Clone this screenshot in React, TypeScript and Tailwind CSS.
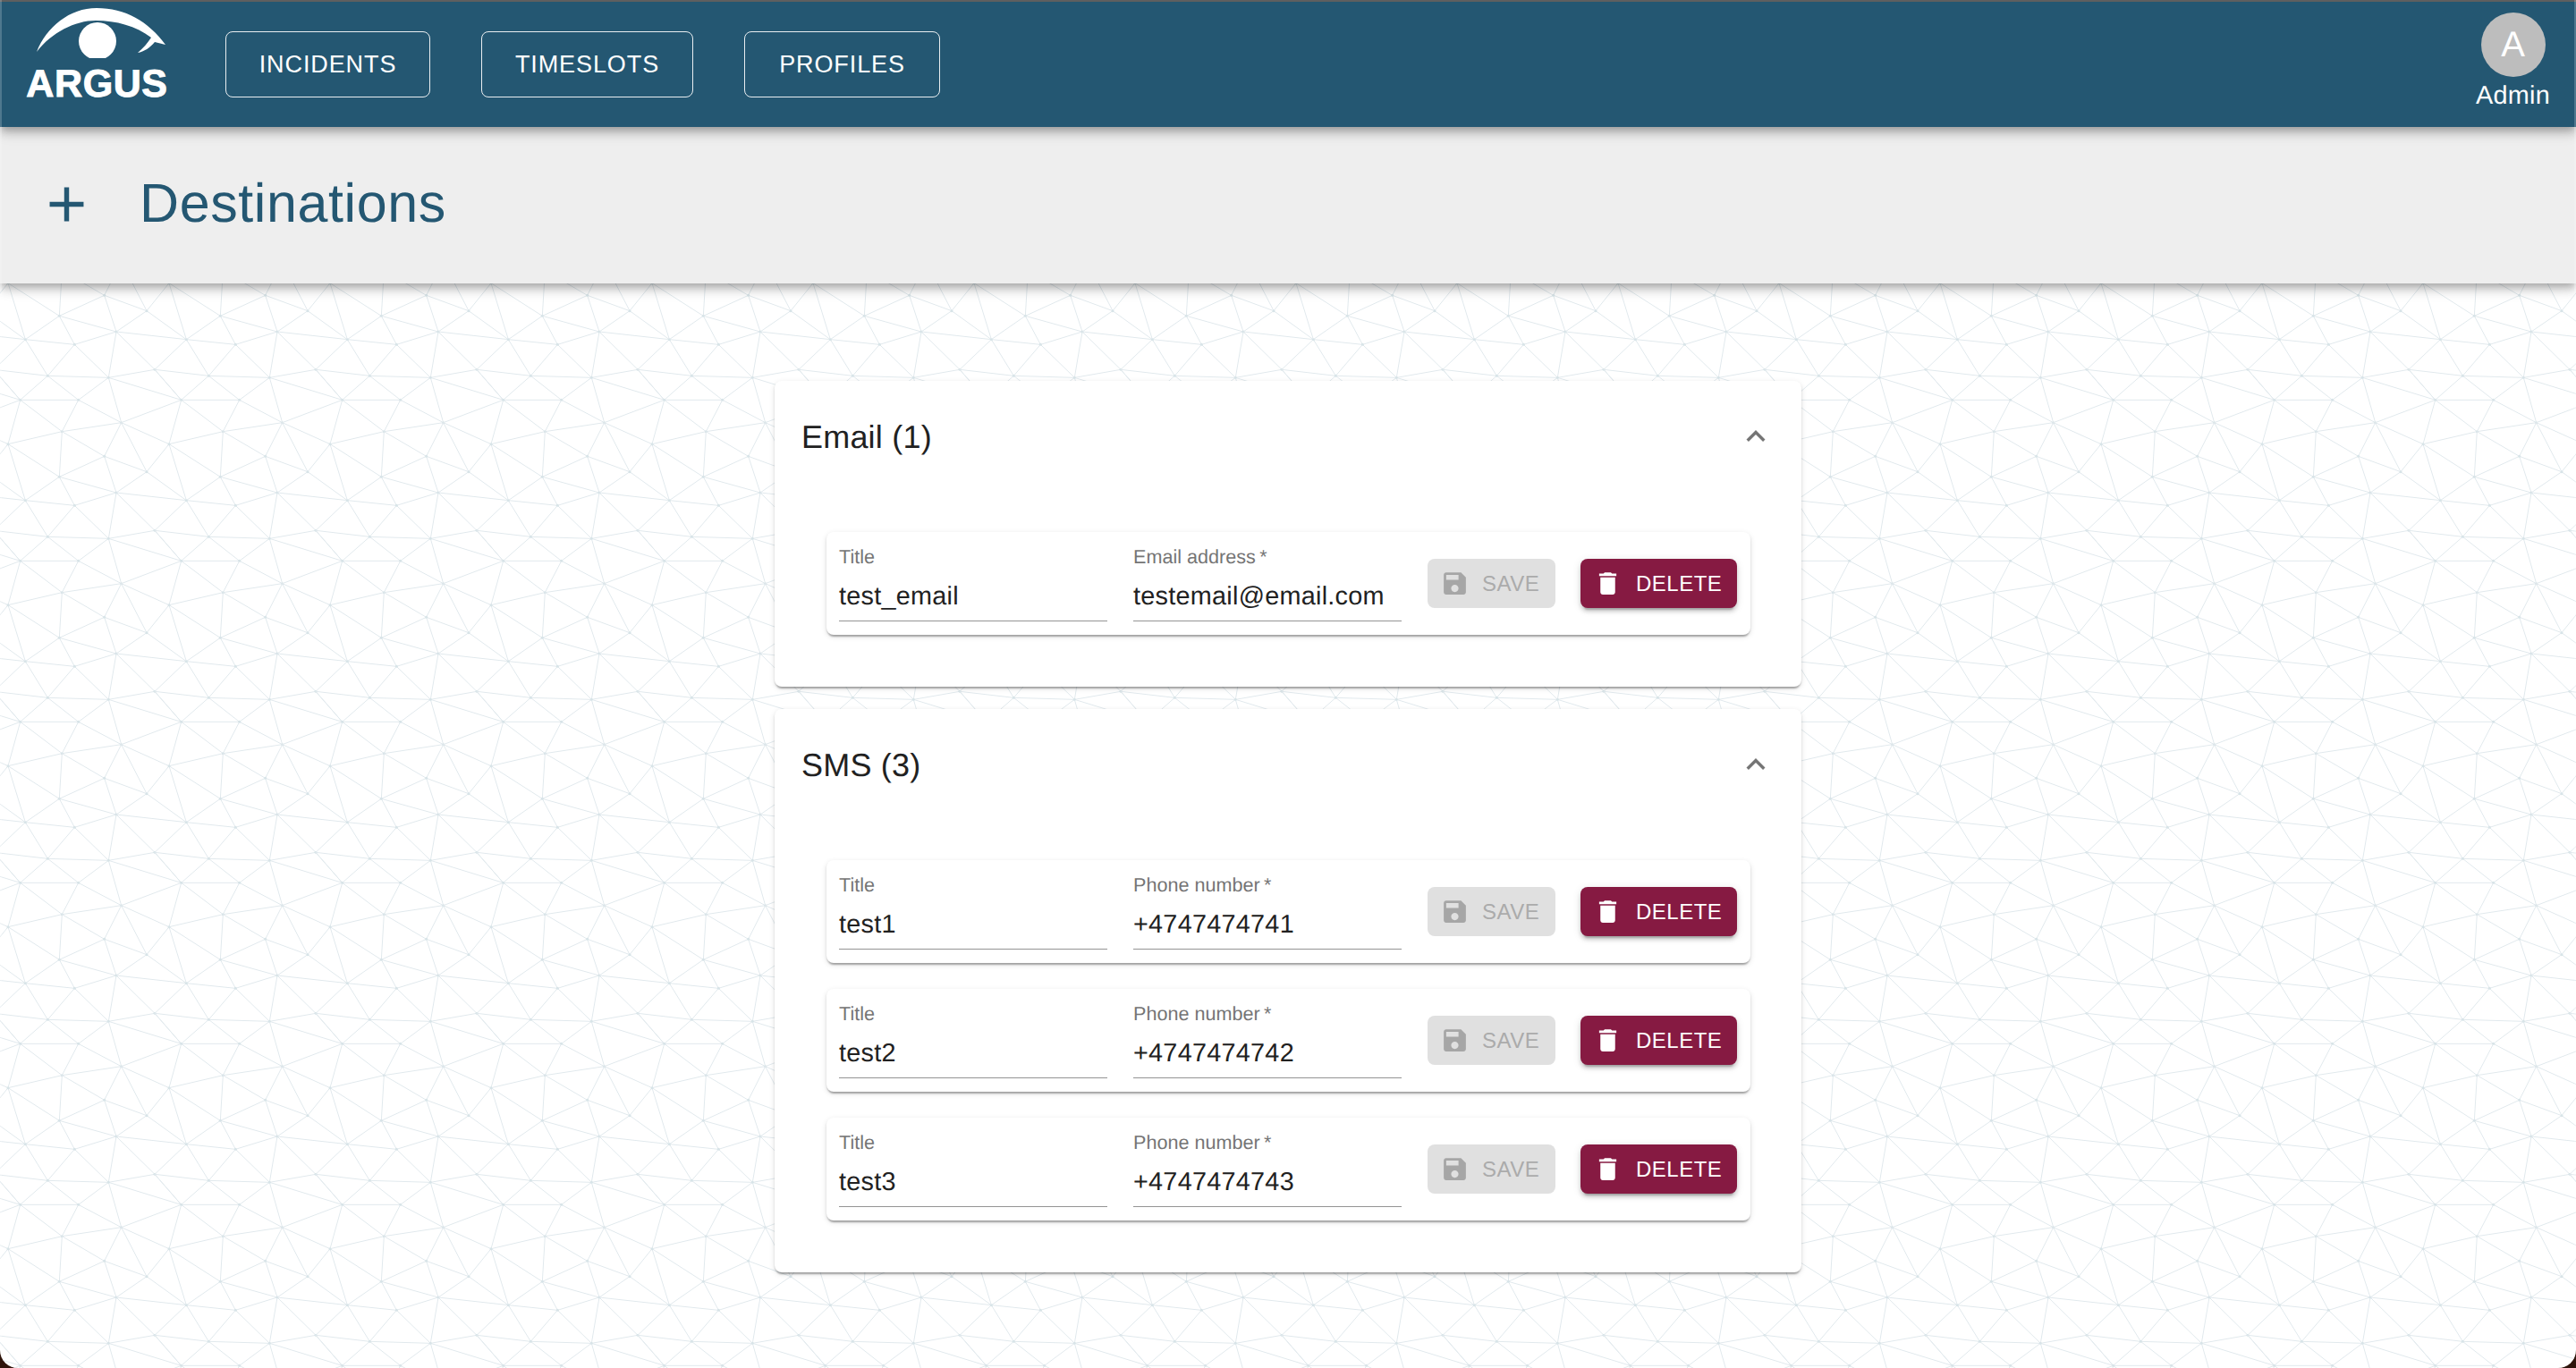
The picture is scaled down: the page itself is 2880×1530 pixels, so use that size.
const EDGES: number[][] = [
  [27, 50, 199, 160], [27, 50, 85, 239], [199, 160, 350, 91], [199, 160, 85, 239], [199, 160, 250, 256],
  [199, 160, 390, 213], [199, 160, 208, 8], [350, 91, 208, 8], [350, 91, 390, 213], [350, 91, 407, -22],
  [350, 91, 492, 143], [492, 143, 390, 213], [492, 143, 625, 239], [492, 143, 407, -22], [492, 143, 567, 50],
  [85, 239, 250, 256], [85, 239, -150, 213], [85, 239, 160, 361], [85, 239, -21, 340], [250, 256, 390, 213],
  [250, 256, 160, 361], [250, 256, 364, 367], [390, 213, 364, 367], [390, 213, 519, 340], [160, 361, 364, 367],
  [160, 361, -21, 340], [160, 361, 68, 442], [160, 361, 263, 442], [364, 367, 519, 340], [364, 367, 263, 442],
  [364, 367, 608, 442], [364, 367, 407, 518], [519, 340, 608, 442], [68, 442, 263, 442], [68, 442, 208, 548],
  [68, 442, 27, 590], [68, 442, -133, 518], [68, 442, -21, 340], [263, 442, 407, 518], [263, 442, 208, 548],
  [407, 518, 208, 548], [407, 518, 567, 590], [208, 548, 27, 590],
];

const NODES = [
  [27, 50], [199, 160], [350, 91], [492, 143], [85, 239], [250, 256], [390, 213],
  [160, 361], [364, 367], [519, 340], [68, 442], [263, 442], [407, 518], [208, 548],
];

const OFFSETS = [-540, 0, 540];

function MeshBackground() {
  return (
    <svg className="absolute inset-0 h-full w-full" aria-hidden="true">
      <defs>
        <pattern
          id="mesh"
          width="180"
          height="180"
          viewBox="0 0 540 540"
          patternUnits="userSpaceOnUse"
          patternTransform="translate(0 300)"
        >
          {OFFSETS.map((dx) =>
            OFFSETS.map((dy) => (
              <g key={`${dx}-${dy}`} transform={`translate(${dx} ${dy})`}>
                {EDGES.map(([x1, y1, x2, y2], i) => (
                  <line key={i} x1={x1} y1={y1} x2={x2} y2={y2} stroke="#e1e9ed" strokeWidth="3" />
                ))}
                {NODES.map(([cx, cy], i) => (
                  <circle key={i} cx={cx} cy={cy} r="4.5" fill="#d8e4e8" />
                ))}
              </g>
            ))
          )}
        </pattern>
      </defs>
      <rect width="100%" height="100%" fill="url(#mesh)" />
    </svg>
  );
}

function Logo() {
  return (
    <div className="flex w-[165px] flex-col items-center self-start pt-[3px]">
      <svg viewBox="25 5 165 60" className="h-[60px] w-[165px] shrink-0" aria-hidden="true">
        <path
          fill="#ffffff"
          d="M41 58C52 30 78 9 108 9C140 9 166 24 185 50L173 47C168 53 161 58 154 59C160 54 165 48 169 42C152 29 130 23 107 23C84 23 58 36 41 58Z"
        />
        <circle cx="109" cy="46" r="21" fill="#ffffff" />
      </svg>
      <span className="mt-[8px] ml-[2px] text-[43px] leading-[42px] font-bold tracking-[0.6px] text-white [-webkit-text-stroke:1px_white]">
        ARGUS
      </span>
    </div>
  );
}

function NavButton({ label, width }: { label: string; width: string }) {
  return (
    <button
      type="button"
      className={`flex h-[74px] items-center justify-center rounded-lg border border-white/90 text-[27px] tracking-[0.9px] text-white ${width}`}
    >
      {label}
    </button>
  );
}

function Field({ label, value, required }: { label: string; value: string; required?: boolean }) {
  return (
    <div className="flex h-[100px] w-[300px] shrink-0 flex-col border-b border-[#949494] pt-[16px]">
      <span className="text-[21.6px] leading-[24px] text-[#757575]">
        {label}
        {required && <span>&thinsp;*</span>}
      </span>
      <span className="mt-[16px] text-[28.8px] leading-[32px] tracking-[0.27px] text-[#212121]">{value}</span>
    </div>
  );
}

function DestinationRow({ title, value, valueLabel }: { title: string; value: string; valueLabel: string }) {
  return (
    <div className="flex h-[115px] items-start rounded-lg bg-white pl-[14px] shadow-[0_4px_2px_-2px_rgba(0,0,0,0.2),0_2px_2px_0_rgba(0,0,0,0.14),0_2px_6px_0_rgba(0,0,0,0.12)]">
      <Field label="Title" value={title} />
      <div className="ml-[29px]">
        <Field label={valueLabel} value={value} required />
      </div>
      <button
        type="button"
        className="mt-[30px] ml-[29px] flex h-[55px] w-[143px] items-center gap-[14px] rounded-lg bg-[#e0e0e0] pl-[14px] text-[24px] tracking-[0.5px] text-[#ababab]"
      >
        <svg viewBox="0 0 24 24" className="h-[33px] w-[33px] shrink-0" fill="#a6a6a6" aria-hidden="true">
          <path d="M17 3H5c-1.11 0-2 .9-2 2v14c0 1.1.89 2 2 2h14c1.1 0 2-.9 2-2V7l-4-4zm-5 16c-1.66 0-3-1.34-3-3s1.34-3 3-3 3 1.34 3 3-1.34 3-3 3zm3-10H5V5h10v4z" />
        </svg>
        SAVE
      </button>
      <button
        type="button"
        className="mt-[30px] ml-[28px] flex h-[55px] w-[175px] items-center gap-[15px] rounded-lg bg-[#861a42] pl-[14px] text-[24px] tracking-[0.5px] text-white shadow-[0_6px_2px_-4px_rgba(0,0,0,0.2),0_4px_4px_0_rgba(0,0,0,0.14),0_2px_10px_0_rgba(0,0,0,0.12)]"
      >
        <svg viewBox="0 0 24 24" className="h-[33px] w-[33px] shrink-0" fill="#ffffff" aria-hidden="true">
          <path d="M6 19c0 1.1.9 2 2 2h8c1.1 0 2-.9 2-2V7H6v12zM19 4h-3.5l-1-1h-5l-1 1H5v2h14V4z" />
        </svg>
        DELETE
      </button>
    </div>
  );
}

function MediumCard({ title, children }: { title: string; children: React.ReactNode }) {
  return (
    <section className="rounded-lg bg-white pb-[58px] shadow-[0_4px_2px_-2px_rgba(0,0,0,0.2),0_2px_2px_0_rgba(0,0,0,0.14),0_2px_6px_0_rgba(0,0,0,0.12)]">
      <div className="flex h-[124px] items-center justify-between pr-[30px] pl-[30px]">
        <h2 className="mt-[2px] text-[36px] leading-[44px] tracking-[0.2px] text-[#212121]">{title}</h2>
        <svg viewBox="0 0 24 24" className="h-[42px] w-[42px]" fill="#757575" aria-hidden="true">
          <path d="M12 8l-6 6 1.41 1.41L12 10.83l4.59 4.58L18 14z" />
        </svg>
      </div>
      <div className="mt-[45px] flex flex-col gap-[29px] pr-[57px] pl-[58px]">{children}</div>
    </section>
  );
}

export default function App() {
  return (
    <div className="h-screen bg-[#2e140b] font-['Liberation_Sans',Arial,sans-serif] [text-rendering:geometricPrecision]">
      <div className="relative h-full overflow-hidden rounded-b-[20px] bg-white">
        <MeshBackground />

        <div className="relative">
          <header className="relative z-20 flex h-[142px] items-center border-t-2 border-[#5f5f5f] bg-[#245772] pr-[29px] pl-[25px] shadow-[0_4px_8px_-2px_rgba(0,0,0,0.2),0_8px_10px_0_rgba(0,0,0,0.14),0_2px_20px_0_rgba(0,0,0,0.12)]">
            <Logo />
            <nav className="ml-[62px] flex items-center gap-[57px]">
              <NavButton label="INCIDENTS" width="w-[229px]" />
              <NavButton label="TIMESLOTS" width="w-[237px]" />
              <NavButton label="PROFILES" width="w-[219px]" />
            </nav>
            <div className="ml-auto flex flex-col items-center self-start pt-[12px]">
              <div className="flex h-[72px] w-[72px] items-center justify-center rounded-full bg-[#bdbdbd] text-[40px] text-white">
                A
              </div>
              <span className="mt-[5px] text-[28.8px] leading-[32px] tracking-[0.27px] text-white">Admin</span>
            </div>
          </header>

          <div className="relative z-10 flex h-[175px] items-center bg-[#eeeeee] pb-[3px] shadow-[0_4px_8px_-2px_rgba(0,0,0,0.2),0_8px_10px_0_rgba(0,0,0,0.14),0_2px_20px_0_rgba(0,0,0,0.12)]">
            <svg viewBox="0 0 24 24" className="ml-[42px] h-[65px] w-[65px] shrink-0" fill="#245772" aria-hidden="true">
              <path d="M19 13h-6v6h-2v-6H5v-2h6V5h2v6h6v2z" />
            </svg>
            <h1 className="mb-[2px] ml-[49px] text-[61px] leading-[72px] tracking-[0.6px] text-[#245772]">Destinations</h1>
          </div>

          <main className="mx-auto mt-[109px] flex w-[1148px] flex-col gap-[25px]">
            <MediumCard title="Email (1)">
              <DestinationRow title="test_email" value="testemail@email.com" valueLabel="Email address" />
            </MediumCard>
            <MediumCard title="SMS (3)">
              <DestinationRow title="test1" value="+4747474741" valueLabel="Phone number" />
              <DestinationRow title="test2" value="+4747474742" valueLabel="Phone number" />
              <DestinationRow title="test3" value="+4747474743" valueLabel="Phone number" />
            </MediumCard>
          </main>
        </div>

        <div className="pointer-events-none absolute inset-0 z-30 rounded-b-[20px] border-x-2 border-white/20" />
      </div>
    </div>
  );
}
